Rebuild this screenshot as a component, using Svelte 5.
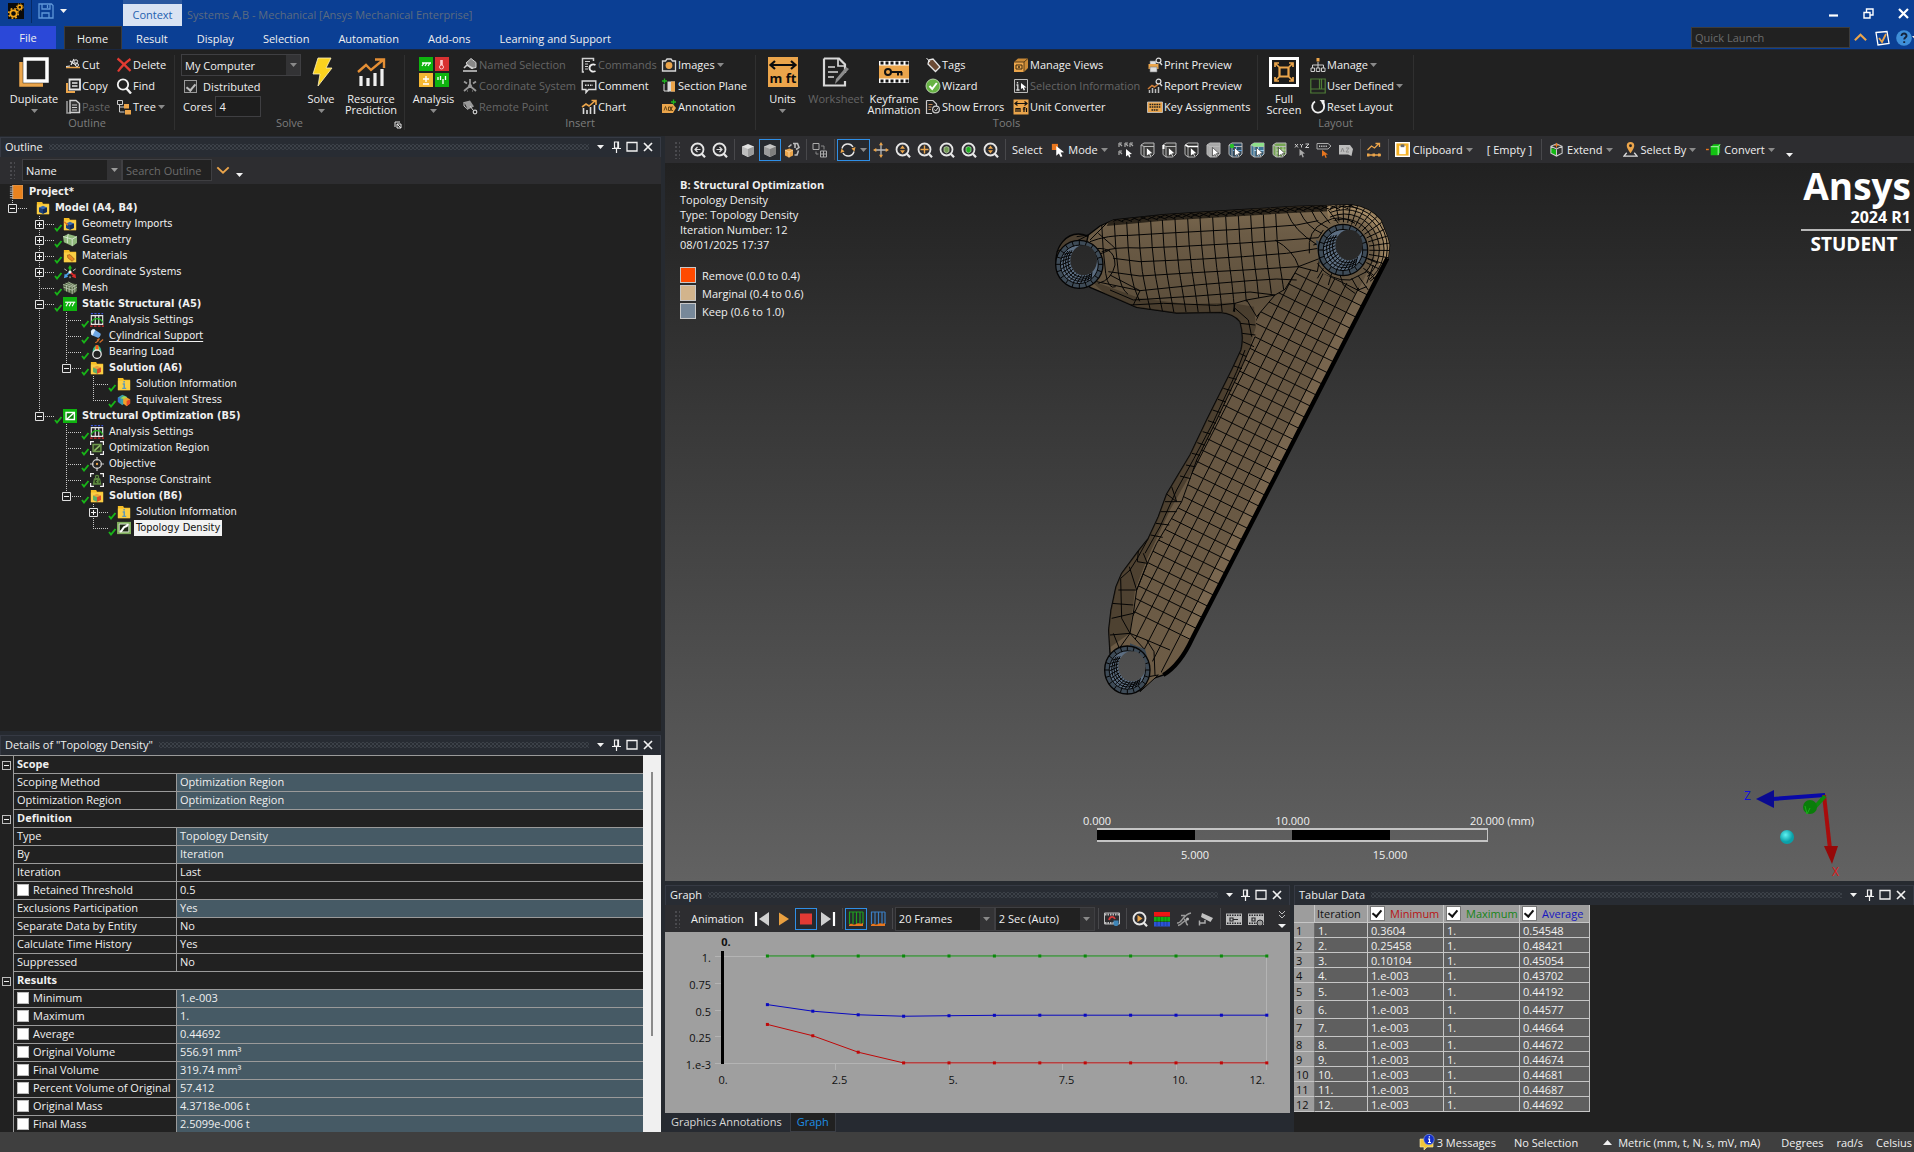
<script lang="ts">
  const O = '#eba54b';
  const W = '#e6e6e6';

  const cube = (a: string, b: string, c: string) =>
    `<path d="M2 4.500 8 2l6 2.500v7.500L8 15l-6-3z" fill="${a}"/><path d="M2 4.500 8 7v8l-6-3z" fill="${b}"/><path d="M14 4.500 8 7v8l6-3z" fill="${c}"/>`;
  const lens = (inner: string) =>
    `<circle cx="7.500" cy="7.500" r="6" fill="none" stroke="${W}" stroke-width="1.800"/><path d="m11.500 11.500 3.500 3.800" stroke="${W}" stroke-width="2.200"/>${inner}`;
  const pick = (face: string, extra = '') =>
    `<path d="M1 3 4 1h10v11l-3 3H4l-3-2.500z" fill="${face}" stroke="#b8b8b8"/><path d="M1 3 4 4.500h10M4 4.500V15" fill="none" stroke="#b8b8b8"/>${extra}<path d="m6.500 5.500 6.500 6-2.700.2L12 15l-1.300.6-1.500-3.200L6.500 14z" fill="#fff" stroke="#222" stroke-width=".6"/>`;
  const folder = '<path d="M1 1h6l1 2h7v12H1z" fill="#f5bd24"/><path d="M1 4h14v11H1z" fill="#fbcf45"/>';
  const ball = (a: string, b: string, c: string) =>
    `<path d="m3.500 7.500 4.500-2L12.500 7.500v5L8 14.500l-4.500-2z" fill="${a}"/><path d="m3.500 7.500 4.500 2v5l-4.500-2z" fill="${b}"/><path d="M12.500 7.500 8 9.500v5l4.500-2z" fill="${c}"/>`;
  const film = '<path d="M0 2.500h16v11.500H0z" fill="#bdbdbd"/><path d="M1 4.300h14M1 12.300h14" stroke="#2b2b2e" stroke-width="1.600" stroke-dasharray="1.500 1"/>';

  const icons: Record<string, string> = {
    gears: `<path d="M0 0h16v16H0z" fill="#0b0b0b"/><circle cx="5.500" cy="10.500" r="3.200" fill="none" stroke="#f5a81c" stroke-width="1.800"/><circle cx="5.500" cy="10.500" r="4.800" fill="none" stroke="#f5a81c" stroke-width="1.500" stroke-dasharray="1.800 2"/><circle cx="11.800" cy="4.200" r="2" fill="none" stroke="#f5a81c" stroke-width="1.500"/><circle cx="11.800" cy="4.200" r="3.300" fill="none" stroke="#f5a81c" stroke-dasharray="1.300 1.300"/>`,
    save: '<path d="M1 1h12.500L15 2.500V15H1z M4 1v5h8V1 M9.500 2v3 M4 15v-5h7v5" fill="none" stroke="#5f97d8" stroke-width="1.300"/>',
    cut: `<path d="M1 10.500h14" stroke="${O}" stroke-width="1.500"/><path d="M9 2 6 8m-1-4 6 4" stroke="${W}" stroke-width="1.300"/><circle cx="11" cy="4.500" r="1.700" fill="none" stroke="${W}"/><circle cx="12" cy="8" r="1.500" fill="none" stroke="${W}"/><path d="M1 9.500 5 9" stroke="${W}"/>`,
    copy: `<path d="M2 5v9h8" fill="none" stroke="${O}" stroke-width="2"/><path d="M4.500 1.500H15v10H4.500z" fill="#222" stroke="${W}" stroke-width="1.800"/><path d="M7 5h5.500M7 8h5.500" stroke="${W}" stroke-width="1.400"/>`,
    paste: '<path d="M2 2v12h4" fill="none" stroke="#9a9a9a" stroke-width="1.600"/><path d="M5 1.500h6l3.500 3v9H5z" fill="#333" stroke="#d0d0d0" stroke-width="1.400"/><path d="M7 6h5M7 8.500h5M7 11h5" stroke="#d0d0d0"/>',
    del: '<path d="M1.500 1.500c4 3 9 8.500 13 12.500M14.500 2C9 6 5 10 2 14.500" fill="none" stroke="#e23b32" stroke-width="2.200"/>',
    find: '<circle cx="7" cy="6.500" r="5.200" fill="none" stroke="#f2f2f2" stroke-width="1.800"/><path d="m10.500 10.500 4.500 5" stroke="#f2f2f2" stroke-width="2.400"/>',
    tree: `<path d="M1.500 1.500h5v4h-5z" fill="none" stroke="#ccc"/><path d="M3.500 6v7h5M3.500 8h5" fill="none" stroke="#ccc"/><path d="M8 5h5v4.500H8zM9 11h6v4.500H9z" fill="${O}"/>`,
    named: '<path d="M4 6 9 1.500l5 4v5l-5 1z" fill="#888" stroke="#d0d0d0"/><path d="M1 14h14M2 11l3-3 6 3.500" stroke="#d0d0d0" stroke-width="1.600" fill="none"/>',
    coord: '<path d="M8 8V1M8 8l-6 5M8 8l6 5M2 3.500l3 2M14 3.500l-3 2M5 13h.500M10.500 13H11" stroke="#9a9a9a" stroke-width="1.800"/><circle cx="8" cy="8" r="2" fill="#9a9a9a"/>',
    remote: '<path d="M2 3 8 1.500l4 6-6 3z" fill="#999"/><path d="M2 3v4l4 3.500" fill="none" stroke="#ccc"/><path d="m8 7 3 4" stroke="#ccc"/><circle cx="13" cy="13" r="1.800" fill="none" stroke="#ccc" stroke-width="1.200"/>',
    commands: '<path d="M3 15H1.500V1.500h11V4" fill="none" stroke="#d0d0d0" stroke-width="1.500"/><path d="M4 4.500h5M4 7h3M4 9.500h3M4 12h3" stroke="#d0d0d0"/><path d="M14.500 8c-3-1.500-6 0-6 3s3 4.500 6 3" fill="none" stroke="#ececec" stroke-width="1.900"/>',
    comment: '<path d="M1.200 3h13.600v8.500H7.500L5 14.500v-3H1.200z" fill="none" stroke="#dcdcdc" stroke-width="1.400"/><path d="M4 7.200h8" stroke="#dcdcdc" stroke-width="1.400" stroke-dasharray="1.500 1"/>',
    chart: `<path d="M2.500 15V9M6 15v-4M9.500 15V8M13.500 15V6" stroke="#dcdcdc" stroke-width="1.600"/><path d="m1 8 4-3 3 2 6-5M10.500 1.500H15V6" fill="none" stroke="${O}" stroke-width="1.600"/>`,
    images: `<path d="M1.500 4h3l1.500-2h4l1.500 2h3v10h-13z" fill="#2a2a2a" stroke="#d8d8d8" stroke-width="1.300"/><circle cx="8" cy="8.500" r="3.400" fill="${O}"/>`,
    section: `<path d="M3 6v7h5" fill="none" stroke="#ddd"/><path d="M1 3h5M3.500.500v5" stroke="#1eb51e" stroke-width="1.300"/><path d="M6.500 3.500H14v10H6.500z" fill="#d8d8d8"/><path d="M10 3.500h4v10h-4z" fill="${O}"/>`,
    annot: `<path d="M1 5h11l3 4-3 5H1z" fill="${O}"/><path d="M3 11.500 4.500 7.500 6 11.500M7.500 8v3.500h2V8zM12 8h-1.500v3.500H12" fill="none" stroke="#5a3d10" stroke-width=".9"/><path d="M10 3h5M12.500.500v5" stroke="#1eb51e" stroke-width="1.300"/>`,
    tags: '<path d="M4 3 8 2l7 8-4.500 4.500L3 7z" fill="#6b4a34" stroke="#e6e6e6" stroke-width="1.300"/><path d="M5 5 1.500 1" stroke="#e6e6e6"/>',
    wizard: '<circle cx="8" cy="8" r="7" fill="#67b344" stroke="#cfe6c3" stroke-width=".8"/><path d="m4.500 8 2.700 3 4.600-6" fill="none" stroke="#fff" stroke-width="2"/>',
    errors: '<path d="M1.500 1.500H8L11.500 5v2M1.500 1.500v13H7" fill="none" stroke="#ccc" stroke-width="1.200"/><path d="M3.500 5.500h4M3.500 8h3M3.500 10.500h2.500" stroke="#c58a55"/><circle cx="11" cy="10.500" r="3.400" fill="#222" stroke="#ccc" stroke-width="1.200"/><path d="m9.500 10.500 1.300 1.500 2-3" fill="none" stroke="#ccc"/>',
    views: `<path d="M1 5h10v10H1z" fill="${O}"/><path d="m1 5 4-3.500h10V11l-4 4V5z" fill="#c98936"/><path d="M1 5h10v10M11 5l4-3.500" fill="none" stroke="#3a2a10" stroke-width=".8"/><path d="M3 8h6v4H3z" fill="none" stroke="#3a2a10"/><circle cx="6" cy="10" r="1" fill="#3a2a10"/>`,
    selinfo: '<path d="M1.500 1.500h13v13h-13z" fill="#2a2a2a" stroke="#bbb"/><path d="M4.500 4v1.500M3.500 7h1.300v5M3.300 12h3.200" stroke="#d8d8d8" stroke-width="1.300" fill="none"/><path d="m8 5 5.500 4.500h-2.500l1 2.500-1.300.5-1-2.500L8 11z" fill="#fff"/>',
    conv: `<path d="M.500.500h15v15H.500z" fill="${O}"/><path d="M2 4.500h12M4.500 2.500l-2.500 2 2.500 2M11.500 2.500l2.500 2-2.500 2M3 13V9.500h4V13M5 9.500V13M11 13V8.500h1.500M9.800 10h2.500M13.500 9v4" fill="none" stroke="#111" stroke-width="1.200"/>`,
    print: `<path d="M1.500 7h10v5h-10z" fill="${O}"/><path d="M3 7V4h6v3M3 10h7v5H3z" fill="#ddd" stroke="#777" stroke-width=".6"/><circle cx="11.500" cy="3.500" r="2.400" fill="#222" stroke="#ddd" stroke-width="1.200"/><path d="m13 5.500 2 2.500" stroke="#ddd" stroke-width="1.400"/>`,
    report: `<path d="M2.500 15v-3M5.500 15v-5M8.500 15v-4M11.500 15V9" stroke="#bbb" stroke-width="1.500"/><path d="m1 11 4-3.500 2.500 1.500 4-3" fill="none" stroke="#cf7f3a" stroke-width="1.500"/><circle cx="11.500" cy="3.500" r="2.400" fill="#222" stroke="#ddd" stroke-width="1.200"/><path d="m13 5.500 2 2.500" stroke="#ddd" stroke-width="1.400"/>`,
    keys: `<path d="M.500 3h15v10.500H.500z" fill="${O}" stroke="#ccc" stroke-width=".8"/><path d="M2.500 5.500h11M2.500 8h11M4.500 11h7" stroke="#222" stroke-width="1.400" stroke-dasharray="1.600 .7"/>`,
    manage: `<path d="M8 5v3M2.500 11V8h11v3M8 8v3" fill="none" stroke="#ccc"/><path d="M6.500 1h3v3.500h-3z" fill="${O}"/><path d="M1 11h3.500v3.500H1zM6.300 11h3.500v3.500H6.300zM11.500 11H15v3.500h-3.500z" fill="none" stroke="#ccc"/>`,
    userdef: '<path d="M.800 1h14.400v14H.800zM.800 11h14.400M9.500 1v10M11.500 1v10" fill="none" stroke="#4f7d37" stroke-width="1.200"/>',
    reset: '<path d="M5 2.500A6 6 0 1 0 12 3" fill="none" stroke="#f0f0f0" stroke-width="1.900"/><path d="M9.500 1h5v5z" fill="#f0f0f0"/>',
    back: lens('<path d="M10.500 7.500h-5M7.500 5l-2.500 2.500L7.500 10" fill="none" stroke="#ddd" stroke-width="1.200"/>'),
    fwd: lens('<path d="M4.500 7.500h5M7.500 5 10 7.500 7.500 10" fill="none" stroke="#ddd" stroke-width="1.200"/>'),
    zud: lens(`<path d="M7.500 3.500 10 6.700H5zM7.500 11.500 10 8.300H5z" fill="${O}"/>`),
    zplus: lens(`<path d="M7.500 3.500v8M3.500 7.500h8" stroke="${O}" stroke-width="1.400"/>`),
    zgreen: lens('<path d="M5 5.500 7.500 4.500 10 5.500v4L7.500 11 5 9.500z" fill="#6f9a52" stroke="#c8d8b8" stroke-width=".7"/>'),
    zgreen2: lens('<path d="M5 5.500 7.500 4.500 10 5.500v4L7.500 11 5 9.500z" fill="#20b020" stroke="#b8d8b8" stroke-width=".7"/>'),
    cubeg: cube('#e2e2e2', '#bdbdbd', '#9a9a9a'),
    cubed: cube('#c4c4c4', '#9b9b9b', '#7e7e7e'),
    cubeo: `<path d="M1 8 5.500 6.500 9 8v5.500L5 15.500l-4-2z" fill="${O}"/><path d="m1 8 4 2v5.500M5 10l4-2" stroke="#f8d8a8" stroke-width=".8" fill="none"/><path d="M9 1.500h4.500l1.500 4-3 2M7.500 2.500 4.500 5M11 2v4M14.500 8.500 13 13h-2.500" fill="none" stroke="#bbb" stroke-width="1.600"/>`,
    views2: '<path d="M1 1.500h6v6H1zM8.500 9h6v6h-6zM8.500 12h6M11.500 9v6" fill="none" stroke="#aaa"/><path d="M9 4h3v3.500M4 9.500V12h2.500" fill="none" stroke="#888"/>',
    rotate: `<path d="M2 6.500A6 6 0 0 1 13 5M14 9.500A6 6 0 0 1 3 11" fill="none" stroke="${W}" stroke-width="1.400"/><path d="m15.500 5-1 4.500-3-3zM.500 11l1-4.500 3 3z" fill="${O}"/>`,
    move: `<path d="M8 3v10M3 8h10" stroke="#bbb" stroke-width="1.300"/><path d="m8 0 2 3.300H6zM8 16l2-3.300H6zM0 8l3.300-2v4zM16 8l-3.300-2v4z" fill="${O}"/>`,
    mode: '<path d="M1 1h7v7H1z" fill="#e8761e"/><path d="m6 3.500 9 7-4 .3L13 15l-2 1-2-4-3 2.500z" fill="#fff"/>',
    pts: '<path d="M1 1h3M1 1v4M7 1h3M7 1v4M12 1h3M12 1v4M1 9h3M1 9v4M2 2l2 2M8 2l2 2M13 2l2 2M2 10l2 2" stroke="#aaa" stroke-width="1.200"/><path d="m8 7 6 5-2.500.2L12.500 15l-1.200.5L10 13l-2 1.500z" fill="#fff"/>',
    p1: pick('#3a3a3a'),
    p2: pick('#3a3a3a', '<path d="M1.500 3v4" stroke="#fff" stroke-width="2"/>'),
    p3: pick('#2e2e2e', '<path d="M1.500 3 4 4.500h10" stroke="#fff" fill="none" stroke-width="1.500"/>'),
    p4: pick('#a8a8a8'),
    p5: pick('#2d4c66', '<circle cx="4" cy="4" r="2.200" fill="#29c229"/><path d="M5 8.500h9M8.500 5v9" stroke="#6aa5d8"/>'),
    p6: pick('#3d7396', '<path d="M1 3 4 4.500h10V1H4z" fill="#8fe08a"/><path d="M4 8.500h10M8.500 5v9" stroke="#9ccbe8"/>'),
    p7: pick('#76a653', '<path d="M4 8h10M4 11h10M7.500 4.500V15M11 4.500V14" stroke="#cfe3bd" stroke-width=".7"/>'),
    xyz: '<path d="m1 2 3 3.500M4 2 1 5.500M6 2l1.500 1.700L9 2M7.500 3.500v2M11.500 2H15l-3.500 3.500H15" fill="none" stroke="#ccc"/><path d="m5.500 7 5.500 4.500-2.300.2L9.800 15l-1.200.5-1.200-3-1.900 1.500z" fill="#aaa"/>',
    ann2: '<path d="M1 1.500h11l3 2.500-3 3H1z" fill="none" stroke="#aaa"/><path d="M3 4.200h8" stroke="#ccc" stroke-width="1.600" stroke-dasharray="1.200 1"/><path d="m6 8 6 4.500-2.400.2 1.200 2.800-1.200.5-1.300-3L6 14.500z" fill="#e8761e"/>',
    az: '<path d="M1 3h11l3 4-1.500 7L10 12.500H1z" fill="#bdbdbd"/><path d="m3 10 1.500-4L6 10M8 6h3l-3 4h3" fill="none" stroke="#8a8a8a"/>',
    trend: `<path d="m1.500 8 4-4 3 2L13 1.500M9.500 1.500H13.500V5M1 13h14" fill="none" stroke="${O}" stroke-width="1.300"/><path d="M1 11.500v3h2.500v-3zM6.500 11.500v3H9v-3zM12 11.500v3h2.500v-3z" fill="${O}"/>`,
    clip: '<path d="M0 0h16v16H0z" fill="#fff"/><path d="M1.500 1.500h13v13h-13z" fill="#f4b024"/><path d="M4.500 4h7v9h-7z" fill="#fff"/><path d="M6 2.500h4v3H6z" fill="#6b6b6b"/>',
    extend: '<path d="M2 4.500 8 2l6 2.500v7.500L8 15l-6-3z" fill="#333"/><path d="M2 6 8 8.500V15l-6-3z" fill="#12b812"/><path d="M2 4.500 8 7.500l6-3M8 7.500V15M2 4.500 8 2l6 2.500v7.500L8 15l-6-3z" fill="none" stroke="#ccc" stroke-width="1.100"/><path d="M8 1v5M5.500 3.500h5" stroke="#e8761e"/>',
    selby: `<path d="M8 0a4 4 0 0 1 4 4c0 3-4 8-4 8S4 7 4 4a4 4 0 0 1 4-4z" fill="${O}"/><circle cx="8" cy="4" r="1.500" fill="#222"/><path d="M4 11.500 1 15h14l-3-3.500" fill="none" stroke="#ddd" stroke-width="1.400"/>`,
    convert: '<path d="m5 5 3-2.500h7V11l-2 3H5z" fill="#12c412"/><path d="M5 5h8v9M13 5l2-2.500" fill="none" stroke="#baf5ba"/><path d="M0 8h3" stroke="#e8761e" stroke-width="1.500"/>',
    project: '<path d="M4 0h12v16H4z" fill="#e8821e" stroke="#d8b088" stroke-width=".7"/><path d="M1 2h4M1 4.500h4M1 7h4M1 9.500h4M1 12h4M1 14.500h4" stroke="#aaa" stroke-width="1.200"/>',
    fmodel: folder + ball('#3a6ab0', '#1c3f7a', '#122a55'),
    fgeo: folder + ball('#3a6ab0', '#1c3f7a', '#122a55') + '<path d="m1.500 5.500 4 4" stroke="#e8761e" stroke-width="1.800"/>',
    geo: '<path d="m0 4 6-3 10 3v7.500l-5 3.500L1 10.500z" fill="#8fb87c"/><path d="m0 4 10.500 3L16 4M10.500 7v8M6 1 5 5.500v6" fill="none" stroke="#e3efdc" stroke-width=".9"/>',
    fmat: folder + '<path d="m5 7 3-.5 5 5-2.500 2.500L5.500 10z" fill="#e88a24" stroke="#9a5a10" stroke-width=".8"/>',
    cs: '<path d="M8 8V2" stroke="#1eb51e" stroke-width="2"/><path d="M8 0 5.500 4h5z" fill="#1eb51e"/><path d="M8 8 3 12.500" stroke="#4aa0e8" stroke-width="2"/><path d="m1 15 1-5 4 3.500z" fill="#4aa0e8"/><path d="m8 8 5 4.500" stroke="#e02b2b" stroke-width="2"/><path d="m15 15-1-5-4 3.500z" fill="#e02b2b"/><path d="m1.500 4.500 3 2M14.500 4.500l-3 2M8 13v2" stroke="#ddd"/><circle cx="8" cy="8" r="1.800" fill="#eee"/>',
    mesh: '<path d="m0 4 6-3 10 3v7.500l-5 3.500L1 10.500z" fill="#566a48"/><path d="m0 4 10.500 3L16 4M.500 7l10 3.500L16 7M10.500 7v8M6 1l7.500 4.500M4 5v7M7 6v7M3 2.500l9 3.500M13.500 5.500v7.500" fill="none" stroke="#ccd6c0" stroke-width=".8"/>',
    static: '<path d="M0 0h16v16H0z" fill="#0fb40f"/><path d="M2.500 6h11.500" stroke="#fff" stroke-width="1.400"/><path d="m5.500 6.500-2 4M9 6.500l-2 4M12.500 6.500l-2 4" stroke="#fff" stroke-width="1.300"/>',
    opt: '<path d="M0 0h16v16H0z" fill="#0fb40f"/><path d="M3.500 4h9.500v8H3.500z" fill="#0b7f0b" stroke="#fff" stroke-width="1.600"/><path d="m4 12 9-8" stroke="#fff" stroke-width="1.800"/>',
    settings: '<path d="M1 .800h14" stroke="#3b53d8" stroke-width="1.500" stroke-dasharray="2.500 1.500"/><path d="M1.500 3h13v10h-13zM6 3v10M10 3v10" fill="none" stroke="#e6e6e6" stroke-width="1.300"/><path d="M1.500 11c2-6 11-6 13 0" fill="none" stroke="#1eb51e" stroke-width="1.300"/><path d="M0 15h16" stroke="#d82a2a" stroke-width="1.600" stroke-dasharray="3 1.500"/>',
    cyl: '<path d="M1 3c1-3 4-3 5-2l6 4c1 1-1 5-3 5L2 7z" fill="#6fa8e6"/><path d="M1 3c1-3 4-3 5-2L3 7.500 1.500 6z" fill="#e6f0fa"/><path d="m8 13 3-2M6 16l4-3M11 15.500l4-3.500" stroke="#cf6a28" stroke-width="1.400"/>',
    bearing: '<path d="M3 8C3 3 5.500 1 8 0c2.500 1 5 3 5 8z" fill="#2fb58a"/><path d="M5.500 7C5.500 3 7 1 8 0c1 1 2.500 3 2.500 7z" fill="#f0c21e"/><path d="M6.500 0h3v6h-3z" fill="#f05a1e"/><circle cx="8" cy="10.500" r="4.800" fill="#222" stroke="#e6e6e6" stroke-width="1.500"/>',
    fsol: folder + ball('#e8a23a', '#5ab06a', '#d8482a'),
    finfo: folder + '<path d="M6.500 8H8.300v5M6 13h4.500" fill="none" stroke="#5f9ab8" stroke-width="1.700"/><path d="M7.300 5.500H9" stroke="#5f9ab8" stroke-width="1.600"/>',
    stress: '<path d="m1 5 5-3 5 2v6l-5 4-5-4z" fill="#3aa0a8"/><path d="M1 5v5l3 2.500V6z" fill="#3b6fd0"/><path d="m4 6 4-2.500L12 5 9 7z" fill="#a8d84a"/><path d="m7 7 4-2 4 2v5l-4 3-4-3z" fill="#f0a02a"/><path d="m11 9 4-2v5l-4 3z" fill="#e2482a"/>',
    region: '<path d="M.700 4.500V.700h3.800M11.500.700h3.800v3.800M15.300 11.500v3.800h-3.800M4.500 15.300H.700v-3.800" fill="none" stroke="#f0f0f0" stroke-width="1.400"/><path d="M3.500 4h9v8h-9z" fill="#2c3a20" stroke="#6f9a4c" stroke-width="1.600"/><path d="m5 11 6.500-6" stroke="#8fbf66" stroke-width="1.600"/>',
    objective: `<circle cx="8" cy="8" r="5" fill="none" stroke="#ccc" stroke-width="1.500"/><path d="M8 0v4M8 12v4M0 8h4M12 8h4" stroke="#ccc" stroke-width="1.400"/><circle cx="8" cy="8" r="1.300" fill="${O}"/>`,
    response: '<path d="M.700 4.500V.700h3.800M11.500.700h3.800v3.800M15.300 11.500v3.800h-3.800M4.500 15.300H.700v-3.800" fill="none" stroke="#f0f0f0" stroke-width="1.400"/><path d="M4.500 6h7l1.500 7.500H3z" fill="#5d8a40"/><circle cx="8" cy="4.500" r="1.800" fill="none" stroke="#5d8a40" stroke-width="1.400"/><path d="M6 8v3.500M6 10l2-2M6 10l2 1.500M10.500 8.500v3" stroke="#1f2b16" fill="none"/>',
    topo: '<path d="M0 1h16v14H0z" fill="#7fae5c"/><path d="M2.500 3.500h11v9h-11z" fill="#1d2716" stroke="#e8f0e0"/><path d="M3.500 12c3 0 3-5 5.500-5.500s3-1.500 3.500-3" fill="none" stroke="#fff" stroke-width="2.400"/>',
    prev: '<path d="M2 1v14" stroke="#fff" stroke-width="2.200"/><path d="M15 1v14L5 8z" fill="#d0d0d0"/>',
    play: '<path d="M3 1.500v13L13 8z" fill="#e9a040"/>',
    stop: '<path d="M2 2.500h12v11H2z" fill="#e23a34"/>',
    next: '<path d="M14 1v14" stroke="#fff" stroke-width="2.200"/><path d="M1 1v14l10-7z" fill="#d0d0d0"/>',
    gbars: '<path d="M1.500 1v12M5 1v12M8.500 1v12M12 1v12M15 1v12M1 1h14" stroke="#1fa01f" stroke-width="1.200" fill="none"/><path d="M1 14c3-3 4 1 7-1s4 1 7-1v3H1z" fill="#e8761e"/>',
    bbars: '<path d="M1.500 1v12M5 1v12M8.500 1v12M12 1v12M15 1v12M1 1h14" stroke="#3b7fc4" stroke-width="1.200" fill="none"/><path d="M1 14c3-3 4 1 7-1s4 1 7-1v3H1z" fill="#e8761e"/>',
    exp: `<path d="M.500 2h15v11H.500z" fill="none" stroke="#bdbdbd"/><path d="M1 3.500h14M1 12h9" stroke="#bdbdbd" stroke-width="2" stroke-dasharray="1.500 1"/><path d="M5 9c1-4 5-4 6-1" stroke="#d83a3a" stroke-width="1.800" fill="none"/><path d="M9.500 9.500h5v4c-1 2-4 2-5 0z" fill="#3f86b8"/>`,
    zplay: lens(`<path d="M5.500 4v7l5-3.500z" fill="${O}"/>`),
    rgb: '<path d="M0 1h16v4.500H0z" fill="#f01414"/><path d="M0 6h16v4.500H0z" fill="#12b012"/><path d="M0 11h16v4.500H0z" fill="#2b54d8"/><path d="M3 6v9M6.500 6v9M10 6v9M13 6v9" stroke="#0004"/>',
    curve: '<path d="M1 12c5 1 5-8 14-10M2 14.500c5-1 4-5 9-5M5 4.500h4M8 8c3 1 1 5 4 6" stroke="#999" stroke-width="1.500" fill="none"/><circle cx="11.500" cy="8" r="1.500" fill="#bbb"/>',
    cam: '<path d="m4 2 11 5-2.500 4L3 6z" fill="#c0c0c0"/><path d="M7 9v3H1.500M1.500 9.500v5" stroke="#aaa" stroke-width="1.500" fill="none"/>',
    film1: film + '<path d="M4 7h3v3H4zM7 8.500h5" fill="none" stroke="#2b2b2e" stroke-width="1.200"/>',
    film2: film + '<path d="M4 7h3v3H4z" fill="none" stroke="#2b2b2e" stroke-width="1.200"/><circle cx="12" cy="12" r="3" fill="#9a9a9a" stroke="#2b2b2e"/>',
    msg: '<path d="M1 5h13v8H8l-3 3v-3H1z" fill="#f2c63a" stroke="#fff0b0" stroke-width=".6"/><circle cx="10" cy="5.500" r="5.200" fill="#1530c8" stroke="#8fa8f0" stroke-width=".6"/><path d="M9 5h1.500v3.500M9 8.500h3M9.700 2.800h1.300" stroke="#fff" stroke-width="1.200" fill="none"/>',
    note: `<path d="m2 2.500 11-1 2 12-11 1.500z" fill="none" stroke="#fff" stroke-width="1.300"/><path d="m5 8 3 4 4-8" fill="none" stroke="${O}" stroke-width="1.800"/>`,
    help: '<circle cx="8" cy="8" r="7.800" fill="#3f8fd8"/><path d="M5.500 6c0-3.500 5.500-3 5 0-.2 1.500-2.300 1.700-2.300 3.500M8.200 11.300v1.700" fill="none" stroke="#14243c" stroke-width="1.900"/>',
    up: `<path d="m2 11 6-6 6 6" fill="none" stroke="${O}" stroke-width="2.200"/>`,
    down: `<path d="m1.500 5 6.500 6 6.500-6" fill="none" stroke="${O}" stroke-width="2.200"/>`
  };

  const big: Record<string, string> = {
    duplicate: `<path d="M2 5v23h22" fill="none" stroke="${O}" stroke-width="3.500"/><path d="M6 2h22v22H6z" fill="#212121" stroke="#fff" stroke-width="3.500"/>`,
    bolt: '<path d="M12 1h13l-5 10h6L12 29l2-12H7z" fill="#fbd21e" stroke="#fff2c0" stroke-width=".8"/>',
    resource: `<path d="M5 29V19M12 29v-8M19 29V16M26 29V12" stroke="#f0f0f0" stroke-width="3.200"/><path d="m2 15 8-7 5 5L27 3M19 2.500h9V11" fill="none" stroke="#e58f35" stroke-width="2.400"/>`,
    analysis: '<path d="M0 0h14v14H0z" fill="#0fb40f"/><path d="M16 0h14v14H16z" fill="#d83232"/><path d="M0 16h14v14H0z" fill="#f5b732"/><path d="M16 16h14v14H16z" fill="#0fb40f"/><path d="M3 6h9M5 6l-2 3M8 6 6 9M11 6 9 9" stroke="#fff" stroke-width="1.300"/><path d="M22.500 3v6" stroke="#ffd0d0" stroke-width="2.600"/><circle cx="22.500" cy="10" r="2" fill="#d83232" stroke="#ffd0d0"/><path d="M4 22h6M7 19v6M4 27h6" stroke="#fff" stroke-width="1.400"/><path d="M19 20v3M21.500 19v4M24 22v5M26.500 19v4" stroke="#fff" stroke-width="1.300"/>',
    units: `<path d="M0 0h30v30H0z" fill="${O}"/><path d="M3 8h24M7 4 2.500 8 7 12M23 4l4.500 4L23 12" fill="none" stroke="#0c0c0c" stroke-width="2.200"/><text x="15" y="26" text-anchor="middle" font-size="13" font-weight="700" fill="#0c0c0c">m ft</text>`,
    worksheet: '<path d="M3 1.500h15l6 6V16M3 1.500v27h21V24" fill="none" stroke="#d8d8d8" stroke-width="2.200"/><path d="M17 2v7h7M7 10h7M7 15h10M7 20h6" fill="none" stroke="#d8d8d8" stroke-width="1.700"/><path d="m28 12-10 11-4 4 1-5 10-12z" fill="#8c8c8c"/>',
    keyframe: `<path d="M0 4h30v22H0z" fill="#fff"/><path d="M0 8.500h30v13H0z" fill="${O}"/><path d="M1.500 6h28M1.500 24h28" stroke="#111" stroke-width="3" stroke-dasharray="3 2"/><circle cx="9" cy="15" r="3" fill="none" stroke="#111" stroke-width="2"/><path d="M12 15h11M19 15v3.500M22.500 15v3.500" stroke="#111" stroke-width="2"/>`,
    full: `<path d="M1.500 1.500h27v27h-27z" fill="#1a1a1a" stroke="#fff" stroke-width="3"/><path d="M10.500 10.500h9v9h-9z" fill="none" stroke="${O}" stroke-width="2.200"/><path d="m10 10-3-3M20 10l3-3M10 20l-3 3M20 20l3 3M6 10V6h4M20 6h4v4M6 20v4h4M20 24h4v-4" fill="none" stroke="${O}" stroke-width="1.700"/>`
  };

  type Item = { t: string; i: string; off?: boolean; dd?: boolean };
  const col = (...a: Item[]) => a;
  const outlineA = col({ t: 'Cut', i: 'cut' }, { t: 'Copy', i: 'copy' }, { t: 'Paste', i: 'paste', off: true });
  const outlineB = col({ t: 'Delete', i: 'del' }, { t: 'Find', i: 'find' }, { t: 'Tree', i: 'tree', dd: true });
  const insertA = col({ t: 'Named Selection', i: 'named', off: true }, { t: 'Coordinate System', i: 'coord', off: true }, { t: 'Remote Point', i: 'remote', off: true });
  const insertB = col({ t: 'Commands', i: 'commands', off: true }, { t: 'Comment', i: 'comment' }, { t: 'Chart', i: 'chart' });
  const insertC = col({ t: 'Images', i: 'images', dd: true }, { t: 'Section Plane', i: 'section' }, { t: 'Annotation', i: 'annot' });
  const toolsA = col({ t: 'Tags', i: 'tags' }, { t: 'Wizard', i: 'wizard' }, { t: 'Show Errors', i: 'errors' });
  const toolsB = col({ t: 'Manage Views', i: 'views' }, { t: 'Selection Information', i: 'selinfo', off: true }, { t: 'Unit Converter', i: 'conv' });
  const toolsC = col({ t: 'Print Preview', i: 'print' }, { t: 'Report Preview', i: 'report' }, { t: 'Key Assignments', i: 'keys' });
  const layoutA = col({ t: 'Manage', i: 'manage', dd: true }, { t: 'User Defined', i: 'userdef', dd: true }, { t: 'Reset Layout', i: 'reset' });

  const tabs = ['Result', 'Display', 'Selection', 'Automation', 'Add-ons', 'Learning and Support'];

  type Node = { d: number; t: string; i: string; x?: '+' | '-'; b?: boolean; u?: boolean; s?: boolean };
  const nodes: Node[] = [
    { d: 0, t: 'Project*', i: 'project', b: true },
    { d: 1, t: 'Model (A4, B4)', i: 'fmodel', x: '-', b: true },
    { d: 2, t: 'Geometry Imports', i: 'fgeo', x: '+' },
    { d: 2, t: 'Geometry', i: 'geo', x: '+' },
    { d: 2, t: 'Materials', i: 'fmat', x: '+' },
    { d: 2, t: 'Coordinate Systems', i: 'cs', x: '+' },
    { d: 2, t: 'Mesh', i: 'mesh' },
    { d: 2, t: 'Static Structural (A5)', i: 'static', x: '-', b: true },
    { d: 3, t: 'Analysis Settings', i: 'settings' },
    { d: 3, t: 'Cylindrical Support', i: 'cyl', u: true },
    { d: 3, t: 'Bearing Load', i: 'bearing' },
    { d: 3, t: 'Solution (A6)', i: 'fsol', x: '-', b: true },
    { d: 4, t: 'Solution Information', i: 'finfo' },
    { d: 4, t: 'Equivalent Stress', i: 'stress' },
    { d: 2, t: 'Structural Optimization (B5)', i: 'opt', x: '-', b: true },
    { d: 3, t: 'Analysis Settings', i: 'settings' },
    { d: 3, t: 'Optimization Region', i: 'region' },
    { d: 3, t: 'Objective', i: 'objective' },
    { d: 3, t: 'Response Constraint', i: 'response' },
    { d: 3, t: 'Solution (B6)', i: 'fsol', x: '-', b: true },
    { d: 4, t: 'Solution Information', i: 'finfo', x: '+' },
    { d: 4, t: 'Topology Density', i: 'topo', s: true }
  ];
  function continues(row: number, level: number): boolean {
    for (let j = row + 1; j < nodes.length; j++) {
      if (nodes[j].d < level) return false;
      if (nodes[j].d === level) return true;
    }
    return false;
  }
  const tree = nodes.map((n, i) => ({
    ...n,
    guides: Array.from({ length: Math.max(0, n.d - 1) }, (_, k) => continues(i, k + 1)),
    more: continues(i, n.d)
  }));

  type Row = { h?: string; l?: string; v?: string; c?: boolean; ro?: boolean };
  const details: Row[] = [
    { h: 'Scope' },
    { l: 'Scoping Method', v: 'Optimization Region', ro: true },
    { l: 'Optimization Region', v: 'Optimization Region', ro: true },
    { h: 'Definition' },
    { l: 'Type', v: 'Topology Density', ro: true },
    { l: 'By', v: 'Iteration', ro: true },
    { l: 'Iteration', v: 'Last' },
    { l: 'Retained Threshold', v: '0.5', c: true },
    { l: 'Exclusions Participation', v: 'Yes', ro: true },
    { l: 'Separate Data by Entity', v: 'No' },
    { l: 'Calculate Time History', v: 'Yes' },
    { l: 'Suppressed', v: 'No' },
    { h: 'Results' },
    { l: 'Minimum', v: '1.e-003', c: true, ro: true },
    { l: 'Maximum', v: '1.', c: true, ro: true },
    { l: 'Average', v: '0.44692', c: true, ro: true },
    { l: 'Original Volume', v: '556.91 mm³', c: true, ro: true },
    { l: 'Final Volume', v: '319.74 mm³', c: true, ro: true },
    { l: 'Percent Volume of Original', v: '57.412', c: true, ro: true },
    { l: 'Original Mass', v: '4.3718e-006 t', c: true, ro: true },
    { l: 'Final Mass', v: '2.5099e-006 t', c: true, ro: true }
  ];

  const mins = ['0.3604', '0.25458', '0.10104', ...Array(9).fill('1.e-003')];
  const avgs = ['0.54548', '0.48421', '0.45054', '0.43702', '0.44192', '0.44577', '0.44664', '0.44672', '0.44674', '0.44681', '0.44687', '0.44692'];
  const px = (n: number) => 57 + 45.4 * n;
  const py = (v: number) => 131 - 107 * v;
  const val = (s: string) => (s === '1.e-003' ? 0.001 : Number(s));
  const series = [
    { c: '#0a8a0a', p: avgs.map((_, i) => [px(i + 1), py(1)]) },
    { c: '#0808c0', p: avgs.map((s, i) => [px(i + 1), py(val(s))]) },
    { c: '#c00808', p: mins.map((s, i) => [px(i + 1), py(val(s))]) }
  ];
  const yTicks: [number, string][] = [[1, '1.'], [0.75, '0.75'], [0.5, '0.5'], [0.25, '0.25'], [0.001, '1.e-3']];
  const xTicks: [number, string][] = [[0, '0.'], [2.5, '2.5'], [5, '5.'], [7.5, '7.5'], [10, '10.'], [11.7, '12.']];

  /* mesh of the optimised part */
  const ux = -0.457, uy = 0.889;
  const legLines: string[] = [];
  for (let k = 0; k < 33; k++) {
    const x = 1052 + ux * (k * 37.5 + 40), y = 248 + uy * (k * 37.5 + 40);
    legLines.push(`M${x} ${y}L${x - 420 * 0.889} ${y - 420 * 0.44}`);
  }
  for (let j = 1; j < 10; j++) {
    const x = 1062 - j * 43, y = 230;
    legLines.push(`M${x} ${y}L${x + ux * 1400} ${y + uy * 1400}`);
  }
  const legGrid = legLines.join('');
  const body =
    'M250 90L400 74L620 60L800 49L965 45Q1020 52 1052 90L1072 140L1079 165L1074 205L487 1345Q450 1420 400 1455L370 1465L240 1390L236 1320L243 1260L258 1190L275 1150L325 1083L355 1045L385 980L410 912L438 865L480 795L530 690L605 540L633 480Q643 440 630 395Q610 370 570 367L440 369L320 352L265 328L180 292L150 240L175 135L210 108Z';
  const legClip =
    'M735 315L765 298L806 230L865 245L940 275L1003 300L1020 310L487 1345L400 1455L300 1330L310 1270L320 1200L352 1120L380 1060L455 935L500 810L560 690L640 520L675 440L680 380Z';
  const armV = [215, 253, 290, 325, 362, 397, 435, 473, 510, 548, 587, 625, 662, 700, 737];
  const armLines = armV
    .map((x, i) => {
      const top = 98 - (x - 253) * 0.055;
      const end = i < 3 ? 290 + i * 22 : i < 11 ? 366 : 335 - (i - 11) * 12;
      const lean = i < 11 ? 42 - i * 1.5 : 24;
      return `M${x} ${top}Q${x + 3} ${top + 80} ${x + 12} ${top + 150}Q${x + 20} ${top + 200} ${x + lean} ${end}`;
    })
    .join('');
  const topHatch = Array.from({ length: 28 }, (_, i) => {
    const x = 250 + i * 26;
    return `M${x} ${94 - i * 1.55}L${x + 26} ${82 - i * 1.55}M${x} ${84 - i * 1.5}l30 12`;
  }).join('');
  const capLines = Array.from({ length: 15 }, (_, i) => {
    const a = -1.75 + i * 0.16;
    return `M${942 + 76 * Math.cos(a)} ${180 + 80 * Math.sin(a)}L${942 + 150 * Math.cos(a)} ${180 + 150 * Math.sin(a)}`;
  }).join('');
  const rings = [
    { cx: 148, cy: 223, rx: 71, ry: 72, hx: 161, hy: 211, hr: 40, hs: 45 },
    { cx: 939, cy: 180, rx: 74, ry: 77, hx: 957, hy: 165, hr: 41, hs: 46 },
    { cx: 292, cy: 1440, rx: 68, ry: 72, hx: 306, hy: 1429, hr: 41, hs: 45 }
  ];
  type Ring = (typeof rings)[0];
  const spokes = (r: Ring) =>
    Array.from({ length: 20 }, (_, i) => {
      const a = (i * Math.PI) / 10;
      return `M${r.cx + r.rx * Math.cos(a)} ${r.cy + r.ry * Math.sin(a)}L${r.cx + r.rx * 0.8 * Math.cos(a)} ${r.cy + r.ry * 0.8 * Math.sin(a)}`;
    }).join('');
  const wall = (r: Ring) =>
    Array.from({ length: 15 }, (_, i) => {
      const a = 0.9 + i * 0.2;
      return `M${r.cx + r.rx * 0.79 * Math.cos(a)} ${r.cy + r.ry * 0.79 * Math.sin(a)}L${r.hx + r.hr * Math.cos(a)} ${r.hy + r.hs * Math.sin(a)}`;
    }).join('');
  /* arcs along the bore, drawn on the visible lower-left wall */
  const bore = (r: Ring) =>
    [0.25, 0.5, 0.75]
      .map((t) => {
        const cx = r.cx + (r.hx - r.cx) * t, cy = r.cy + (r.hy - r.cy) * t;
        const a = r.rx * 0.79 + (r.hr - r.rx * 0.79) * t, b = r.ry * 0.79 + (r.hs - r.ry * 0.79) * t;
        const p = (w: number) => `${cx + a * Math.cos(w)} ${cy + b * Math.sin(w)}`;
        return `M${p(0.9)}A${a} ${b} 0 0 1 ${p(3.9)}`;
      })
      .join('');
</script>

{#snippet ic(name: string, size = 16)}
  <svg class="ic" width={size} height={size} viewBox="0 0 16 16" aria-hidden="true">{@html icons[name]}</svg>
{/snippet}

{#snippet tri(color = '#8a8a8a')}
  <svg class="ic" width="7" height="4" viewBox="0 0 7 4" aria-hidden="true"><path d="M0 0h7L3.500 4z" fill={color} /></svg>
{/snippet}

{#snippet column(items: Item[])}
  <div class="col">
    {#each items as it}
      <button class="cmd" class:off={it.off} disabled={it.off}>{@render ic(it.i)}<span>{it.t}</span>{#if it.dd}{@render tri()}{/if}</button>
    {/each}
  </div>
{/snippet}

{#snippet bigBtn(name: string, label: string, dd = false, off = false)}
  <button class="big" class:off disabled={off}>
    <svg width="30" height="30" viewBox="0 0 30 30" aria-hidden="true">{@html big[name]}</svg>
    <span class="biglabel">{label}</span>
    {#if dd}{@render tri()}{/if}
  </button>
{/snippet}

{#snippet head(title: string)}
  <header class="phead">
    <h2>{title}</h2>
    <span class="dots"></span>
    <button aria-label="Panel menu">{@render tri('#f2f2f2')}</button>
    <button aria-label="Pin panel"><svg width="9" height="12" viewBox="0 0 9 12"><path d="M2.500 1h4v6h-4zM5.800 1v6M0 7.500h9M4.500 8v4" fill="none" stroke="#f2f2f2" stroke-width="1.200" /></svg></button>
    <button aria-label="Maximize panel"><svg width="12" height="11" viewBox="0 0 12 11"><path d="M1 1.500h10v8.500H1z" fill="none" stroke="#f2f2f2" stroke-width="1.300" /></svg></button>
    <button aria-label="Close panel"><svg width="10" height="10" viewBox="0 0 10 10"><path d="m1 1 8 8M9 1 1 9" stroke="#f2f2f2" stroke-width="1.700" /></svg></button>
  </header>
{/snippet}

{#snippet tool(name: string, label: string, on = false)}
  <button class="tool" class:on aria-label={label}>{@render ic(name)}</button>
{/snippet}

<div class="app">
  <header class="title">
    <div class="caption">
      <div class="quick">
        {@render ic('gears')}
        <span class="vline"></span>
        <button aria-label="Save">{@render ic('save')}</button>
        <button aria-label="Customize">{@render tri('#f2f2f2')}</button>
      </div>
      <span class="context">Context</span>
      <h1>Systems A,B - Mechanical [Ansys Mechanical Enterprise]</h1>
      <div class="winctl">
        <button aria-label="Minimize"><svg width="10" height="12" viewBox="0 0 10 12"><path d="M0 8.500h9" stroke="#fff" stroke-width="2.200" /></svg></button>
        <button aria-label="Restore"><svg width="11" height="11" viewBox="0 0 11 11"><path d="M1 4.500h6v5.500H1zM3.500 4V1H10v6H7.500" fill="none" stroke="#fff" stroke-width="1.400" /></svg></button>
        <button aria-label="Close"><svg width="11" height="11" viewBox="0 0 11 11"><path d="m1 1 9 9M10 1 1 10" stroke="#fff" stroke-width="2.200" /></svg></button>
      </div>
    </div>
    <nav class="tabs">
      <button class="tab file">File</button>
      <button class="tab home">Home</button>
      {#each tabs as t}<button class="tab">{t}</button>{/each}
      <div class="launch">
        <input type="text" placeholder="Quick Launch" aria-label="Quick Launch" />
        <button aria-label="Collapse ribbon">{@render ic('up', 15)}</button>
        <button aria-label="Notes">{@render ic('note')}</button>
        <button aria-label="Help">{@render ic('help')}{@render tri('#f2f2f2')}</button>
      </div>
    </nav>
  </header>

  <section class="ribbon">
    <div class="group g-outline">
      <div class="items">{@render bigBtn('duplicate', 'Duplicate', true)}{@render column(outlineA)}{@render column(outlineB)}</div>
      <div class="glabel">Outline</div>
    </div>
    <div class="group g-solve">
      <div class="items">
        <div class="solveform">
          <span class="drop"><select aria-label="Solve process"><option>My Computer</option></select><span class="arrow">{@render tri()}</span></span>
          <label class="dist"><input type="checkbox" class="dark" checked />Distributed</label>
          <label class="cores">Cores<input type="text" value="4" /></label>
        </div>
        {@render bigBtn('bolt', 'Solve', true)}{@render bigBtn('resource', 'Resource Prediction')}
      </div>
      <div class="glabel">Solve</div>
      <svg class="corner" width="8" height="8" viewBox="0 0 8 8"><path d="M1 6V1h5M3 3h4v4H3zM3 3l4 4" fill="none" stroke="#e6e6e6" /></svg>
    </div>
    <div class="group g-insert">
      <div class="items">{@render bigBtn('analysis', 'Analysis', true)}{@render column(insertA)}{@render column(insertB)}{@render column(insertC)}</div>
      <div class="glabel">Insert</div>
    </div>
    <div class="group g-tools">
      <div class="items">{@render bigBtn('units', 'Units', true)}{@render bigBtn('worksheet', 'Worksheet', false, true)}{@render bigBtn('keyframe', 'Keyframe Animation')}{@render column(toolsA)}{@render column(toolsB)}{@render column(toolsC)}</div>
      <div class="glabel">Tools</div>
    </div>
    <div class="group g-layout">
      <div class="items">{@render bigBtn('full', 'Full Screen')}{@render column(layoutA)}</div>
      <div class="glabel">Layout</div>
    </div>
  </section>

  <main>
    <div class="left">
      <section class="panel outline">
        {@render head('Outline')}
        <div class="obar">
          <span class="grip"></span>
          <span class="drop name"><select aria-label="Filter by"><option>Name</option></select><span class="arrow">{@render tri('#9a9a9a')}</span></span>
          <input type="text" placeholder="Search Outline" aria-label="Search Outline" />
          <button class="exp" aria-label="Expand">{@render ic('down', 14)}</button>
          <span class="over">{@render tri('#f2f2f2')}</span>
        </div>
        <ul class="tree">
          {#each tree as n}
            <li>
              {#each n.guides as g}
                <svg class="guide" width="27" height="16" viewBox="0 0 27 16">{#if g}<path d="M12.500 0v16" stroke="#c8c8c8" stroke-dasharray="1 1" />{/if}</svg>
              {/each}
              {#if n.d > 0}
                <svg class="guide" width="27" height="16" viewBox="0 0 27 16">
                  <path d={n.more ? 'M12.500 0v16' : 'M12.500 0v8'} stroke="#c8c8c8" stroke-dasharray="1 1" />
                  <path d="M12 8.500h15" stroke="#c8c8c8" stroke-dasharray="1 1" />
                  {#if n.x}<path d="M8.500 4.500h8v8h-8z" fill="#212121" stroke="#e0e0e0" /><path d={n.x === '+' ? 'M10 8.500h5M12.500 6v5' : 'M10 8.500h5'} stroke="#f4f4f4" />{/if}
                </svg>
                <svg class="guide" width="9" height="16" viewBox="0 0 9 16">{#if n.d > 1}<path d="m1 12 2 2.500L7.500 9" fill="none" stroke="#18b418" stroke-width="1.900" />{/if}</svg>
              {/if}
              <span class="nicon">{@render ic(n.i, 14)}</span>
              <span class="ntext" class:bold={n.b} class:under={n.u} class:sel={n.s}>{n.t}</span>
            </li>
          {/each}
        </ul>
      </section>

      <section class="panel details">
        {@render head('Details of "Topology Density"')}
        <div class="dbody">
          <table class="props">
            <tbody>
              {#each details as r, i}
                {#if r.h}
                  <tr><td class="gut"><button aria-label={'Collapse ' + r.h}><svg width="5" height="1" viewBox="0 0 5 1"><path d="M0 0h5v1H0z" fill="#eee" /></svg></button></td><th colspan="2">{r.h}</th></tr>
                {:else}
                  <tr>
                    <td class="gut"></td>
                    <td class="lab">{#if r.c}<label class="ck"><input type="checkbox" class="plain" />{r.l}</label>{:else}{r.l}{/if}</td>
                    <td class:ro={r.ro}>{r.v}</td>
                  </tr>
                {/if}
              {/each}
            </tbody>
          </table>
          <div class="scroll"><span></span></div>
        </div>
      </section>
    </div>

    <div class="right">
      <div class="gbar">
        <span class="grip"></span>
        {@render tool('back', 'Previous view')}{@render tool('fwd', 'Next view')}<span class="sep"></span>
        {@render tool('cubeg', 'Isometric')}{@render tool('cubed', 'Shaded', true)}{@render tool('cubeo', 'Display style')}<span class="sep"></span>
        {@render tool('views2', 'Viewports')}<span class="sep"></span>
        <button class="tool on wide" aria-label="Rotate">{@render ic('rotate')}{@render tri()}</button>
        {@render tool('move', 'Pan')}{@render tool('zud', 'Zoom')}{@render tool('zplus', 'Box zoom')}{@render tool('zgreen', 'Zoom to fit')}{@render tool('zgreen2', 'Zoom to selection')}{@render tool('zud', 'Magnifier')}<span class="sep"></span>
        <span class="txt">Select</span>
        <button class="tbtn mode">{@render ic('mode', 14)}<span>Mode</span>{@render tri()}</button>
        {@render tool('pts', 'Smart select')}{@render tool('p1', 'Vertex')}{@render tool('p2', 'Edge')}{@render tool('p3', 'Face')}{@render tool('p4', 'Body')}{@render tool('p5', 'Node')}{@render tool('p6', 'Element face')}{@render tool('p7', 'Element')}{@render tool('xyz', 'Hit point')}{@render tool('ann2', 'Probe')}{@render tool('az', 'Label')}<span class="sep"></span>
        {@render tool('trend', 'Trend')}<span class="sep"></span>
        <button class="tbtn clip">{@render ic('clip', 15)}<span>Clipboard</span>{@render tri()}</button>
        <span class="txt empty">[ Empty ]</span><span class="sep"></span>
        <button class="tbtn">{@render ic('extend', 15)}<span>Extend</span>{@render tri()}</button>
        <button class="tbtn">{@render ic('selby', 15)}<span>Select By</span>{@render tri()}</button>
        <button class="tbtn">{@render ic('convert', 15)}<span>Convert</span>{@render tri()}</button>
        <span class="over">{@render tri('#f2f2f2')}</span>
      </div>

      <section class="view">
        <div class="info">
          <strong>B: Structural Optimization</strong>
          <span>Topology Density</span>
          <span>Type: Topology Density</span>
          <span>Iteration Number: 12</span>
          <span>08/01/2025 17:37</span>
          <ul>
            <li><i class="remove"></i>Remove (0.0 to 0.4)</li>
            <li><i class="marginal"></i>Marginal (0.4 to 0.6)</li>
            <li><i class="keep"></i>Keep (0.6 to 1.0)</li>
          </ul>
        </div>

        <svg class="part" width="400" height="520" viewBox="0 0 1200 1560" role="img" aria-label="Topology density mesh">
          <defs>
            <linearGradient id="arm" x1="0" y1="0" x2="0" y2="1">
              <stop offset="0" stop-color="#7d6a50" /><stop offset=".06" stop-color="#6c5c46" /><stop offset=".2" stop-color="#5d4f3c" /><stop offset=".25" stop-color="#655541" /><stop offset="1" stop-color="#6d5c46" />
            </linearGradient>
            <radialGradient id="cap" gradientUnits="userSpaceOnUse" cx="940" cy="180" r="150">
              <stop offset=".5" stop-color="#6b5b45" stop-opacity="0" /><stop offset=".85" stop-color="#a98e68" /><stop offset="1" stop-color="#8a7556" />
            </radialGradient>
            <clipPath id="bodyclip"><path d={body} /></clipPath>
            <clipPath id="legclip"><path d={legClip} /></clipPath>
            <clipPath id="capclip"><path d="M900 40H1090V215L1030 290L1000 240L1005 180L960 100L900 90Z" /></clipPath>
            <mask id="holes">
              <rect width="1200" height="1560" fill="#fff" />
              {#each rings as r}<ellipse cx={r.hx} cy={r.hy} rx={r.hr} ry={r.hs} fill="#000" />{/each}
            </mask>
          </defs>
          <g mask="url(#holes)" fill="none" stroke="#050505" stroke-linejoin="round">
            <ellipse cx="145" cy="212" rx="67" ry="80" fill="#4c4031" stroke-width="4" />
            <path d={body} fill="url(#arm)" stroke-width="4" />
            <g clip-path="url(#bodyclip)">
              <path d="M230 108L400 92L800 68L900 64L965 40L250 70Z" fill="#2c251b" stroke="none" />
              <path d="M180 270L330 325L470 342L600 338L672 350L678 410L650 500L500 820L420 960L350 1110L315 1200L300 1330L200 1400L200 1100L600 380L300 380Z" fill="#362d20" stroke="none" opacity=".55" />
              <path d="M1060 200L470 1345" stroke="#86725a" stroke-width="42" opacity=".55" />
              <path d="M890 40H1090V215L1060 240L1010 180L900 150Z" fill="url(#cap)" stroke="none" />
              <g stroke-width="3">
                <path d={topHatch} />
                <path d={armLines} />
                <path d="M180 155Q230 135 300 136L400 130L625 118L800 105L865 92M215 185Q250 170 330 174L440 170L625 160L770 150L865 143L880 120M250 205L330 215L500 208L640 200L770 190L865 175M235 245L330 258L510 247L645 240L805 230L870 205M200 275L330 302L510 284L660 272L740 267L800 270M240 300L310 330L500 318L660 306L735 315L765 298L806 230M300 345L400 340L560 346L615 340L650 330L735 315M650 330L680 380L735 315M615 340L610 365M615 355L655 390L665 440M805 230L862 245L870 200M240 255L330 302L310 345M735 150Q790 180 806 230M773 70Q790 120 862 165M810 66Q830 110 875 130M845 63L862 95L895 115M870 62L900 100M895 60L925 100M175 180Q255 160 255 225Q245 270 205 280M205 130L245 165L255 175M180 150L230 100M190 200L240 180" />
              </g>
              <path d={legGrid} clip-path="url(#legclip)" stroke-width="3" />
              <g stroke-width="3">
                <path d="M675 440L640 520L560 690L500 810L455 935L380 1060L352 1120L320 1200L310 1270L300 1330M645 480L620 545L548 700L492 805L440 900L390 1010L345 1090M638 455L672 470M628 490L650 500M612 528L636 536M596 562L620 568M580 595L604 602M564 628L588 636M548 660L572 668M534 692L558 700M518 725L542 732M502 758L526 766M486 790L510 796M468 825L494 830M450 858L482 866M630 400L676 405M636 430L676 435" />
                <path d="M425 890L440 935L410 912M405 935L455 935M392 965L440 965M378 1000L418 1005M362 1035L398 1042M355 1045L325 1100L300 1140L272 1165M340 1090L352 1120L320 1200L265 1200M298 1130L320 1200M325 1083L322 1115L352 1120M272 1165L275 1285L300 1330L240 1335M245 1240L310 1245M245 1285L310 1270M250 1330L268 1375L300 1330L350 1350L372 1385L375 1455M350 1350L420 1380M300 1330L345 1380" />
                <path d={capLines} clip-path="url(#capclip)" />
                <g clip-path="url(#capclip)">
                  <ellipse cx="942" cy="181" rx="90" ry="94" /><ellipse cx="943" cy="179" rx="105" ry="107" /><ellipse cx="944" cy="177" rx="118" ry="118" /><ellipse cx="944" cy="174" rx="128" ry="125" />
                </g>
                <path d="M838 190Q830 120 885 95Q930 70 975 100M862 220Q900 275 960 270L1010 245M850 165L868 160M930 255L940 285L975 310M965 265L985 300L1010 290M880 235L862 265M905 250L895 285M1010 205L1045 220M1000 235L1030 255M1010 245L1040 270M985 258L1015 300M1030 225L1010 280" />
              </g>
            </g>
            <path d="M1072 205L487 1345Q450 1425 400 1455" stroke="#000" stroke-width="13" />
            <path d="M175 135L80 185M175 135L140 140" stroke-width="3" />
            <path d="M858 150L868 215Q900 262 965 250L1000 225Z" fill="#3b4854" stroke="none" />
            <path d="M300 1360L345 1378L360 1430L300 1380Z" fill="#3b4854" stroke="none" />
            <path d="M355 1460L385 1455L330 1505Z" fill="#6d5c46" stroke-width="3" />
            {#each rings as r}
              <ellipse cx={r.cx} cy={r.cy} rx={r.rx} ry={r.ry} fill="#3e4b57" stroke-width="4" />
              <ellipse cx={r.cx} cy={r.cy} rx={r.rx * 0.8} ry={r.ry * 0.8} fill="#5c6e82" stroke-width="3" />
              <path d={spokes(r)} stroke-width="3" />
              <path d={wall(r)} stroke-width="3" />
              <path d={bore(r)} stroke-width="3" />
            {/each}
          </g>
        </svg>

        <div class="logo">
          <div class="brand">Ansys</div>
          <div class="rel">2024 R1</div>
          <div class="edition">STUDENT</div>
        </div>

        <div class="scale">
          <div class="marks"><span>0.000</span><span>10.000</span><span class="last">20.000 (mm)</span></div>
          <div class="ruler"><i></i><i></i><i></i><i></i></div>
          <div class="marks below"><span>5.000</span><span>15.000</span></div>
        </div>

        <svg class="triad" width="110" height="98" viewBox="0 0 110 98" role="img" aria-label="Axis triad">
          <defs>
            <radialGradient id="ballg" cx=".4" cy=".35"><stop offset="0" stop-color="#5ff2f2" /><stop offset="1" stop-color="#0aa0a8" /></radialGradient>
          </defs>
          <text x="4" y="18" font-size="12" fill="#1010e0">Z</text>
          <path d="M85 13 32 17" stroke="#0808a8" stroke-width="4" /><path d="m16 17 18-9v18z" fill="#0a0a90" />
          <path d="m84 13 6 54" stroke="#a80c0c" stroke-width="4" /><path d="M84 64h14l-6 18z" fill="#960808" />
          <path d="m85 14-10 11" stroke="#0c8a0c" stroke-width="4" /><circle cx="70" cy="25" r="7" fill="#0a7d0a" /><path d="m65 24 2 8 3-6" fill="none" stroke="#19b319" />
          <circle cx="47" cy="55" r="7" fill="url(#ballg)" />
          <text x="92" y="94" font-size="12" fill="#e01818">X</text>
        </svg>
      </section>

      <div class="bottom">
        <section class="panel graph">
          {@render head('Graph')}
          <div class="abar">
            <span class="grip"></span>
            <span class="txt anim">Animation</span>
            {@render tool('prev', 'First frame')}{@render tool('play', 'Play')}{@render tool('stop', 'Stop', true)}{@render tool('next', 'Last frame')}<span class="sep"></span>
            {@render tool('gbars', 'Distributed', true)}{@render tool('bbars', 'Result sets')}<span class="sep"></span>
            <span class="drop frames"><select aria-label="Frames"><option>20 Frames</option></select><span class="arrow">{@render tri()}</span></span>
            <span class="drop frames"><select aria-label="Duration"><option>2 Sec (Auto)</option></select><span class="arrow">{@render tri()}</span></span>
            <span class="sep"></span>{@render tool('exp', 'Export video')}<span class="sep"></span>
            {@render tool('zplay', 'Zoom to frame')}{@render tool('rgb', 'Contours')}{@render tool('curve', 'Path')}{@render tool('cam', 'Camera')}<span class="sep"></span>
            {@render tool('film1', 'Keyframes')}{@render tool('film2', 'Keyframe options')}
            <button class="more" aria-label="More tools"><svg width="8" height="18" viewBox="0 0 8 18"><path d="m1 1 3 3 3-3M1 5l3 3 3-3" fill="none" stroke="#bbb" /><path d="M0 14h8l-4 4z" fill="#f2f2f2" /></svg></button>
          </div>
          <div class="plot">
            <svg width="100%" viewBox="0 0 625 181" role="img" aria-label="Density by iteration">
              <path d="M50 24.500H601.500V138M50 51.500h7M50 78.500h7M50 104.500h7M50 131.500H602M170.500 131v7M284.500 131v7M397.500 131v7M511.500 131v7" fill="none" stroke="#b4b4b4" />
              <path d="M57.500 19v113" stroke="#000" stroke-width="3" />
              {#each series as s}
                <polyline points={s.p.map((p) => p.join(',')).join(' ')} fill="none" stroke={s.c} stroke-width="1" />
                {#each s.p as p}<rect x={p[0] - 1.5} y={p[1] - 1.5} width="3" height="3" fill={s.c} />{/each}
              {/each}
              <text x="61" y="14" text-anchor="middle" class="b">0.</text>
              {#each yTicks as [v, t]}<text x="46" y={py(v) + 6} text-anchor="end">{t}</text>{/each}
              {#each xTicks as [v, t]}<text x={px(v) + (v ? 4 : 1)} y="152" text-anchor="middle">{t}</text>{/each}
            </svg>
          </div>
          <div class="ptabs"><button>Graphics Annotations</button><button class="cur">Graph</button></div>
        </section>

        <section class="panel tabular">
          {@render head('Tabular Data')}
          <table class="data">
            <thead>
              <tr>
                <th class="n"></th>
                <th class="it">Iteration</th>
                <th class="w"><label class="red"><input type="checkbox" checked />Minimum</label></th>
                <th class="w"><label class="green"><input type="checkbox" checked />Maximum</label></th>
                <th class="a"><label class="blue"><input type="checkbox" checked />Average</label></th>
              </tr>
            </thead>
            <tbody>
              {#each avgs as a, i}
                <tr class:tall={i > 3 && i < 7}><th>{i + 1}</th><td>{i + 1}.</td><td>{mins[i]}</td><td>1.</td><td>{a}</td></tr>
              {/each}
            </tbody>
          </table>
        </section>
      </div>
    </div>
  </main>

  <footer>
    <span class="msg">{@render ic('msg')}3 Messages</span>
    <span class="nosel">No Selection</span>
    <span class="unit"><svg width="9" height="5" viewBox="0 0 9 5"><path d="M0 5h9L4.500 0z" fill="#f2f2f2" /></svg>Metric (mm, t, N, s, mV, mA)</span>
    <span>Degrees</span>
    <span>rad/s</span>
    <span>Celsius</span>
  </footer>
</div>

<style>
  :global(body) { margin: 0; background: #252a30; }
  .app {
    display: flex; flex-direction: column; height: 100vh; overflow: hidden;
    font-family: "Open Sans", "Noto Sans", sans-serif; font-size: 11px; line-height: 15px; color: #f0f0f0; background: #262a30;
  }
  .app :global(*) { box-sizing: border-box; }
  button { font: inherit; color: inherit; background: none; border: 0; padding: 0; margin: 0; display: flex; align-items: center; white-space: nowrap; }
  input, select { font: inherit; color: inherit; border-radius: 0; margin: 0; outline: 0; min-width: 0; }
  ul { list-style: none; margin: 0; padding: 0; }
  h1, h2 { font: inherit; margin: 0; }
  svg { flex: none; display: block; }

  .title { background: #0b3f94; flex: none; }
  .caption { display: flex; height: 26px; align-items: center; }
  .quick { display: flex; align-items: center; gap: 6px; width: 123px; padding: 0 0 4px 8px; height: 26px; }
  .vline { width: 1px; height: 24px; margin-left: 1px; background: #072a66; }
  .context { width: 59px; height: 26px; background: #d9e3f3; color: #2461b0; text-align: center; border-top: 4px solid #2a579f; line-height: 22px; }
  h1 { color: #5c6b80; padding: 3px 0 0 5px; }
  .winctl { margin-left: auto; display: flex; align-items: center; gap: 24px; padding-right: 5px; }
  .tabs { display: flex; height: 23px; align-items: stretch; }
  .tab { padding: 2px 15px 0 14px; }
  .file { background: #2b48d8; width: 56px; justify-content: center; margin-right: 8px; padding: 0; }
  .home { background: #212121; border: 1px solid #3a3a3a; border-bottom: 0; padding: 0 13px 0 12px; }
  .launch { margin: 0 -5px 0 auto; display: flex; align-items: center; gap: 6px; }
  .launch input { width: 159px; height: 21px; background: #212121; border: 1px solid #3c3c3c; padding: 0 3px; margin-right: -3px; }
  .launch input::placeholder, .obar input::placeholder { color: #6c6c6c; opacity: 1; }

  .ribbon { flex: none; display: flex; height: 87px; background: #212121; padding-top: 5px; border-top: 1px solid #1a2740; }
  .group { position: relative; height: 75px; border-right: 1px solid #303030; }
  .items { display: grid; height: 62px; }
  .glabel { text-align: center; color: #7d7d7d; line-height: 12px; }
  .g-outline { width: 175px; }
  .g-outline .items { grid-template-columns: 62px 51px 1fr; padding-left: 3px; }
  .g-solve { width: 230px; }
  .g-solve .items { grid-template-columns: 120px 40px 60px; padding-left: 6px; }
  .g-insert { width: 351px; }
  .g-insert .items { grid-template-columns: 57px 119px 80px 1fr; }
  .g-tools { width: 502px; }
  .g-tools .items { grid-template-columns: 53px 54px 62px 88px 134px 1fr; }
  .g-layout { width: 156px; }
  .g-layout .items { grid-template-columns: 52px 1fr; }
  .col { display: flex; flex-direction: column; margin-top: -1px; }
  .cmd { height: 21px; gap: 1px; flex: none; }
  .cmd :global(svg:last-child:not(:first-child)) { margin-left: 1px; }
  .off { color: #666; }
  .big { flex-direction: column; align-items: center; height: 62px; padding-top: 2px; white-space: normal; text-align: center; line-height: 11px; }
  .biglabel { margin: 6px 0 5px; }
  .solveform { display: flex; flex-direction: column; margin-top: -1px; }
  .corner { position: absolute; right: 2px; bottom: 1px; }
  .drop { position: relative; display: flex; height: 22px; }
  .drop select { appearance: none; width: 100%; height: 100%; background: #212121; border: 1px solid #3f3f42; padding: 0 18px 0 3px; }
  .arrow { position: absolute; right: 1px; top: 1px; bottom: 1px; width: 14px; background: #333335; display: flex; align-items: center; justify-content: center; pointer-events: none; }
  .dist { display: flex; align-items: center; height: 20px; gap: 6px; padding-left: 3px; }
  input[type='checkbox'] { appearance: none; width: 13px; height: 13px; flex: none; position: relative; }
  .dark { background: #2c2c2c; border: 1px solid #9a9a9a; }
  .cores { display: flex; align-items: center; gap: 3px; padding-left: 2px; }
  .cores input { width: 46px; height: 21px; background: #1d1d1d; border: 1px solid #3f3f42; padding: 0 3px; }
  input[type='checkbox']:checked::after { content: ''; position: absolute; left: 3px; top: 1px; width: 4px; height: 7px; border: solid currentColor; border-width: 0 2px 2px 0; transform: rotate(40deg); }
  .dark:checked::after { color: #bdbdbd; }

  main { flex: 1; min-height: 0; display: grid; grid-template-columns: 661px minmax(0, 1fr); gap: 4px; }
  .left { display: flex; flex-direction: column; gap: 4px; min-height: 0; padding-top: 1px; }
  .panel { display: flex; flex-direction: column; min-height: 0; min-width: 0; }
  .phead { flex: none; display: flex; align-items: center; height: 20px; background: #282c33; border: 1px solid #363a44; border-bottom: 0; padding: 0 7px 2px 4px; gap: 6px; }
  .dots { flex: 1; height: 6px; background-image: radial-gradient(#3c4148 30%, transparent 40%), radial-gradient(#3c4148 30%, transparent 40%); background-size: 4px 4px; background-position: 0 0, 2px 2px; }
  .phead button { width: 10px; justify-content: center; }
  .outline { flex: 1; background: #212121; }
  .obar, .gbar, .abar { flex: none; display: flex; align-items: center; height: 27px; background: #2d2d30; }
  .grip { width: 6px; height: 18px; background-image: radial-gradient(#4a4a4e 35%, transparent 45%); background-size: 4px 4px; }
  .obar { padding: 0 0 1px 9px; }
  .name { width: 100px; margin-left: 7px; }
  .obar input { width: 90px; height: 22px; background: #212121; border: 1px solid #3f3f42; padding: 0 3px; }
  .exp { margin-left: 4px; }
  .over { align-self: flex-end; padding: 0 0 6px 6px; }
  .tree { font-family: "DejaVu Sans Condensed", "DejaVu Sans", sans-serif; }
  .tree li { display: flex; height: 16px; align-items: center; white-space: nowrap; line-height: 16px; }
  .guide { height: 16px; }
  .nicon { width: 14px; display: flex; }
  .ntext { margin-left: 4px; padding: 0 1px; }
  .tree li:nth-child(1) .nicon { margin-left: 9px; }
  .tree li:nth-child(1) .ntext { margin-left: 5px; }
  .bold { font-weight: 700; }
  .under { text-decoration: underline; text-underline-offset: 2px; }
  .sel { background: #f2f2f2; color: #111; padding: 0 2px; margin-left: 3px; }

  .details { flex: 0 0 397px; overflow: hidden; background: #212121; }
  .dbody { display: flex; flex: 1; min-height: 0; overflow: hidden; align-items: flex-start; }
  .props { flex: 1; border-spacing: 0; table-layout: fixed; border-top: 1px solid #9a9a9a; }
  .props tr { height: 18px; }
  .props td, .props th { height: 18px; padding: 0 3px 2px; border-bottom: 1px solid #9a9a9a; border-left: 1px solid #9a9a9a; text-align: left; line-height: 15px; white-space: nowrap; vertical-align: middle; }
  .props .gut { width: 13px; border: 0; padding: 0 0 0 2px; }
  .props .lab { width: 163px; }
  .gut button { width: 9px; height: 9px; border: 1px solid #bdbdbd; justify-content: center; }
  .props .ro { background: #465a65; }
  .ck { display: flex; align-items: center; gap: 4px; height: 15px; }
  .plain { background: #fff; border: 1px solid #bcbcbc; }
  input.plain { width: 12px; height: 12px; }
  .scroll { width: 18px; align-self: stretch; background: #f0f0f0; padding: 17px 0 96px; display: flex; justify-content: center; }
  .scroll span { width: 2px; background: #8a8a8a; }

  .right { display: flex; flex-direction: column; min-width: 0; min-height: 0; }
  .gbar { padding-left: 9px; }
  .gbar .grip { margin-right: 7px; }
  .tool { width: 22px; height: 22px; flex: none; justify-content: center; }
  .on { border: 1px solid #2f8fe6; background: #26292e; }
  .wide { width: 33px; gap: 4px; }
  .sep { width: 1px; height: 21px; margin: 0 2px 0 3px; background: #48484b; flex: none; }
  .txt { padding: 0 4px; white-space: nowrap; }
  .tbtn { gap: 3px; padding: 0 5px; }
  .mode { margin-right: 2px; }
  .clip { padding: 0 8px 0 4px; }
  .empty { padding: 0 6px; }
  .gbar .over { padding-left: 6px; }

  .view { position: relative; flex: 1; min-height: 0; background: linear-gradient(#212121, #626262); }
  .info { position: absolute; left: 15px; top: 14px; display: flex; flex-direction: column; }
  .info strong { font-weight: 700; }
  .info ul { margin-top: 14px; }
  .info li { display: flex; align-items: center; gap: 6px; height: 18px; }
  .info i { width: 16px; height: 16px; border: 1px solid #c8c8c8; }
  .remove { background: #ff4a00; }
  .marginal { background: #d2b48c; }
  .keep { background: #778899; }
  .part { position: absolute; left: 365px; top: 27px; }
  .logo { position: absolute; right: 3px; top: 0; width: 110px; display: flex; flex-direction: column; color: #fff; font-weight: 700; text-align: right; }
  .brand { font-size: 37px; line-height: 46px; }
  .rel { font-size: 16px; line-height: 16px; padding-bottom: 4px; border-bottom: 2px solid #b8b8b8; }
  .edition { font-size: 19px; line-height: 26px; text-align: center; padding-right: 4px; }
  .scale { position: absolute; left: 432px; bottom: 19px; width: 391px; }
  .marks { display: flex; justify-content: space-between; height: 15px; margin: 0 -18px; }
  .marks span { width: 36px; white-space: nowrap; text-align: center; }
  .marks .last { text-align: left; }
  .below { margin: 5px 80px 0; }
  .ruler { display: flex; height: 14px; border: 1px solid #c4c4c4; border-width: 2px 1px 2px 0; }
  .ruler i { flex: 1; }
  .ruler i:nth-child(odd) { background: #000; }
  .triad { position: absolute; right: 64px; bottom: 1px; }

  .bottom { flex: 0 0 247px; display: grid; grid-template-columns: 625fr 620fr; gap: 4px; margin-top: 4px; min-height: 0; }
  .abar { padding-left: 9px; }
  .abar .grip { margin-right: 7px; }
  .anim { padding-right: 7px; }
  .frames { width: 100px; height: 24px; }
  .more { margin-left: auto; padding-right: 4px; }
  .plot { flex: 1; min-height: 0; background: #9f9f9f; overflow: hidden; }
  .plot text { font-size: 11px; fill: #111; }
  .plot .b { font-weight: 700; }
  .ptabs { flex: none; height: 19px; display: flex; background: #262a31; }
  .ptabs button { padding: 0 8px 2px 6px; color: #d8d8d8; }
  .ptabs .cur { color: #1e8fe6; background: #212121; border: 1px solid #3a3d44; border-top: 0; padding: 0 6px 1px; }

  .tabular { background: #212121; }
  .data { border-spacing: 0; table-layout: fixed; width: 296px; }
  .data th, .data td { height: 15px; line-height: 13px; padding: 0 3px; border-right: 1px solid #c6c6c6; border-bottom: 1px solid #c6c6c6; text-align: left; font-weight: 400; white-space: nowrap; }
  .data td { background: #5f5f5f; }
  .data th { background: #9d9d9d; color: #111; }
  .data tbody th { padding: 0 0 0 2px; border-right-color: #6c6c6c; }
  .data thead th { height: 18px; padding: 0 2px; }
  .data thead .n { width: 21px; }
  .data thead .it { width: 53px; }
  .data thead .w { width: 76px; }
  .data thead .a { width: 70px; }
  .tall th, .tall td { height: 18px; }
  .data label { display: flex; align-items: center; gap: 5px; }
  .data input { width: 15px; height: 15px; background: #fff; color: #111; border: 1px solid #777; }
  .data .red { color: #b81414; }
  .data .green { color: #168416; }
  .data .blue { color: #1616c0; }

  footer { flex: none; height: 20px; background: #3f3f3f; display: flex; align-items: center; justify-content: flex-end; gap: 13px; padding-right: 2px; white-space: nowrap; }
  .msg, .unit { display: flex; align-items: center; }
  .msg { gap: 2px; margin-right: 5px; }
  .nosel { margin-right: 12px; }
  .unit { gap: 6px; margin-right: 8px; }
</style>
